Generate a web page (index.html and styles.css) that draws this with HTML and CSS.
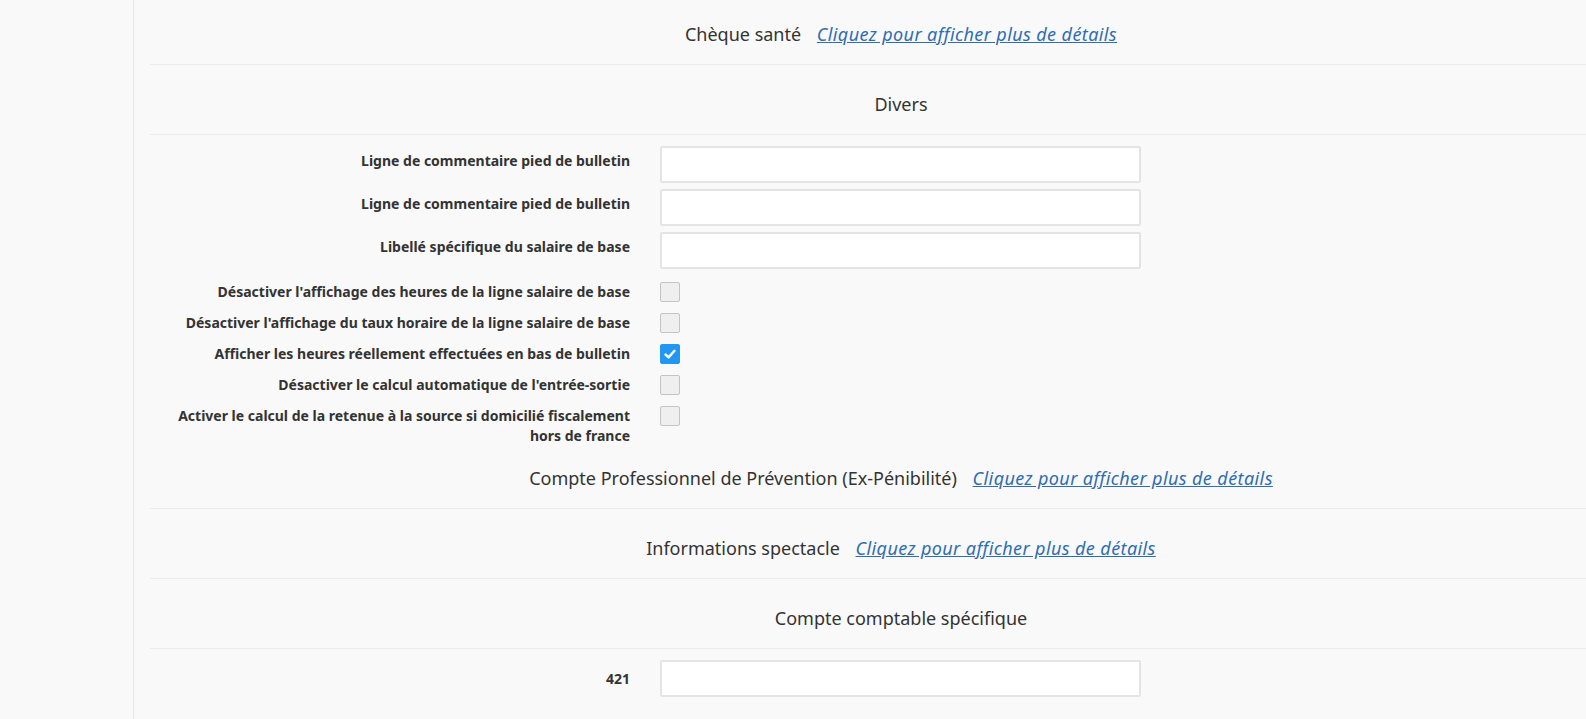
FILE: index.html
```html
<!DOCTYPE html>
<html lang="fr">
<head>
  <meta charset="UTF-8">
  <title>Fiche salarié - Paramètres de paie</title>
  <meta name="viewport" content="width=device-width, initial-scale=1.0">
  <link rel="stylesheet" href="styles.css">
</head>
<body>
  <div class="layout">
    <aside class="sidebar"></aside>

    <main class="content">
      <!-- Chèque santé -->
      <section class="block">
        <div class="block-head">
          <span class="block-title">Chèque santé</span>
          <a href="#" class="details-link">Cliquez pour afficher plus de détails</a>
        </div>
      </section>

      <!-- Divers -->
      <section class="block">
        <div class="block-head">
          <span class="block-title">Divers</span>
        </div>
        <div class="block-body">
          <div class="field field-input">
            <label>Ligne de commentaire pied de bulletin</label>
            <input type="text" class="text-input">
          </div>
          <div class="field field-input">
            <label>Ligne de commentaire pied de bulletin</label>
            <input type="text" class="text-input">
          </div>
          <div class="field field-input">
            <label>Libellé spécifique du salaire de base</label>
            <input type="text" class="text-input">
          </div>
          <div class="field field-check">
            <label>Désactiver l'affichage des heures de la ligne salaire de base</label>
            <span class="checkbox"></span>
          </div>
          <div class="field field-check">
            <label>Désactiver l'affichage du taux horaire de la ligne salaire de base</label>
            <span class="checkbox"></span>
          </div>
          <div class="field field-check">
            <label>Afficher les heures réellement effectuées en bas de bulletin</label>
            <span class="checkbox checked">
              <svg viewBox="0 0 20 20" width="20" height="20"><path d="M5.5 10.5 L8.6 13.4 L14.5 6.8" fill="none" stroke="#fff" stroke-width="2.4" stroke-linecap="round" stroke-linejoin="round"/></svg>
            </span>
          </div>
          <div class="field field-check">
            <label>Désactiver le calcul automatique de l'entrée-sortie</label>
            <span class="checkbox"></span>
          </div>
          <div class="field field-check">
            <label>Activer le calcul de la retenue à la source si domicilié fiscalement hors de france</label>
            <span class="checkbox"></span>
          </div>
        </div>
      </section>

      <!-- Pénibilité -->
      <section class="block">
        <div class="block-head">
          <span class="block-title">Compte Professionnel de Prévention (Ex-Pénibilité)</span>
          <a href="#" class="details-link">Cliquez pour afficher plus de détails</a>
        </div>
      </section>

      <!-- Spectacle -->
      <section class="block">
        <div class="block-head">
          <span class="block-title">Informations spectacle</span>
          <a href="#" class="details-link">Cliquez pour afficher plus de détails</a>
        </div>
      </section>

      <!-- Compte comptable -->
      <section class="block">
        <div class="block-head">
          <span class="block-title">Compte comptable spécifique</span>
        </div>
        <div class="block-body">
          <div class="field field-input field-short">
            <label>421</label>
            <input type="text" class="text-input">
          </div>
        </div>
      </section>
    </main>
  </div>
</body>
</html>
```

FILE: styles.css
```css
* { box-sizing: border-box; }
html, body { height: 100%; }
body {
  margin: 0;
  font-family: 'Noto Sans', 'Open Sans', sans-serif;
  background: #f9f9f9;
  color: #333;
  overflow: hidden;
}
.layout {
  display: flex;
  min-height: 100%;
}
.sidebar {
  width: 134px;
  flex-shrink: 0;
  border-right: 1px solid #e6e6e6;
  background: #f9f9f9;
}
.content {
  flex: 1;
  padding-left: 16px;
  margin-top: -5px; /* list is scrolled a little */
}

/* section headers */
.block-head {
  padding: 27px 0 18px 66px;
  line-height: 24px;
  text-align: center;
  border-bottom: 1px solid #ebebeb;
  font-size: 18px;
}
.details-link {
  margin-left: 11px;
  color: #2f6db3;
  font-style: italic;
  letter-spacing: 0.4px;
  text-decoration: underline;
}

/* form rows */
.block-body { padding: 11px 0 2px; }
.field {
  display: grid;
  grid-template-columns: 460px 481px;
  column-gap: 30px;
  padding-left: 20px;
  align-items: start;
}
.field label {
  text-align: right;
  font-size: 14px;
  font-weight: bold;
  line-height: 20px;
}
.field-input { margin-bottom: 6px; }
.field-input label { padding-top: 5px; }
.field-input + .field-check { margin-top: 13px; }
.field-check {
  height: 20px;
  margin-bottom: 11px;
}
.field-short { align-items: center; }
.field-short label { padding-top: 0; }

.text-input {
  height: 37px;
  border: 2px solid #e4e4e4;
  border-radius: 2px;
  background: #fff;
  padding: 0 8px;
  font: inherit;
}
.checkbox {
  width: 20px;
  height: 20px;
  border: 1px solid #c4c4c4;
  border-radius: 2px;
  background: #efefef;
}
.checkbox.checked {
  border-color: #2196f3;
  background: #2196f3;
}
.checkbox svg {
  display: block;
  margin: -1px;
}
```
